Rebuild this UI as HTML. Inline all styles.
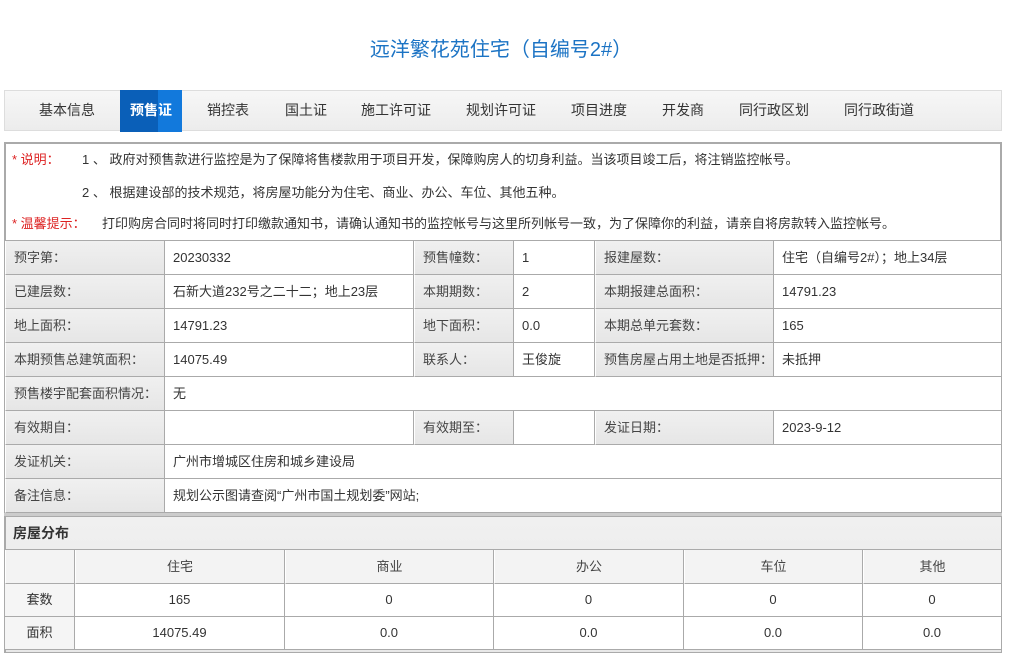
<!DOCTYPE html>
<html><head><meta charset="utf-8"><style>
*{margin:0;padding:0;box-sizing:border-box}
body{width:1012px;height:653px;background:#fff;font-family:"Liberation Sans","Noto Sans CJK SC",sans-serif;color:#333;position:relative;overflow:hidden;font-size:13px}
.a{position:absolute;white-space:nowrap}
.title{left:0;width:1002px;text-align:center;top:36px;font-size:20px;color:#1b73c4;line-height:28px}
.tabbar{left:4px;top:90px;width:998px;height:41px;background:linear-gradient(#f7f7f7,#ececec);border:1px solid #ddd}
.tab{top:90px;line-height:41px;font-size:14px;color:#333}
.act{left:120px;top:90px;width:62px;height:42px;background:linear-gradient(90deg,#0a5fb8 0,#0a5fb8 38px,#1279dc 38px);color:#fff;font-weight:bold;text-align:center;line-height:41px;font-size:14px}
.box{left:4px;top:142px;width:998px;height:372px;border:2px solid #aaa;border-bottom:none}
.red{color:#d22}
.cell{position:absolute;border-right:1px solid #aaa;border-bottom:1px solid #aaa;height:34px;line-height:33px;padding-left:8px;font-size:13px}
.lb{background:linear-gradient(#f0f0f0,#e6e6e6);border-left:1px solid #fff;color:#444}
.vl{background:#fff}
.cen{text-align:center;padding-left:0}
</style></head><body>
<div class="a title">远洋繁花苑住宅（自编号2#）</div>
<div class="a tabbar"></div>
<div class="a tab" style="left:39px">基本信息</div>
<div class="a act">预售证</div>
<div class="a tab" style="left:207px">销控表</div>
<div class="a tab" style="left:285px">国土证</div>
<div class="a tab" style="left:361px">施工许可证</div>
<div class="a tab" style="left:466px">规划许可证</div>
<div class="a tab" style="left:571px">项目进度</div>
<div class="a tab" style="left:662px">开发商</div>
<div class="a tab" style="left:739px">同行政区划</div>
<div class="a tab" style="left:844px">同行政街道</div>
<div class="a box"></div>
<div class="a red" style="left:12px;top:151px;line-height:18px">* 说明：</div>
<div class="a" style="left:82px;top:151px;line-height:18px">1 、 政府对预售款进行监控是为了保障将售楼款用于项目开发，保障购房人的切身利益。当该项目竣工后，将注销监控帐号。</div>
<div class="a" style="left:82px;top:184px;line-height:18px">2 、 根据建设部的技术规范，将房屋功能分为住宅、商业、办公、车位、其他五种。</div>
<div class="a red" style="left:12px;top:215px;line-height:18px">* 温馨提示：</div>
<div class="a" style="left:102px;top:215px;line-height:18px">打印购房合同时将同时打印缴款通知书，请确认通知书的监控帐号与这里所列帐号一致，为了保障你的利益，请亲自将房款转入监控帐号。</div>
<div class="a" style="left:5px;top:240px;width:997px;border-top:1px solid #aaa"></div>
<div class="cell lb" style="left:5px;top:241px;width:160px">预字第：</div>
<div class="cell vl" style="left:165px;top:241px;width:249px">20230332</div>
<div class="cell lb" style="left:414px;top:241px;width:100px">预售幢数：</div>
<div class="cell vl" style="left:514px;top:241px;width:81px">1</div>
<div class="cell lb" style="left:595px;top:241px;width:179px">报建屋数：</div>
<div class="cell vl" style="left:774px;top:241px;width:228px">住宅（自编号2#）；地上34层</div>

<div class="cell lb" style="left:5px;top:275px;width:160px">已建层数：</div>
<div class="cell vl" style="left:165px;top:275px;width:249px">石新大道232号之二十二；地上23层</div>
<div class="cell lb" style="left:414px;top:275px;width:100px">本期期数：</div>
<div class="cell vl" style="left:514px;top:275px;width:81px">2</div>
<div class="cell lb" style="left:595px;top:275px;width:179px">本期报建总面积：</div>
<div class="cell vl" style="left:774px;top:275px;width:228px">14791.23</div>

<div class="cell lb" style="left:5px;top:309px;width:160px">地上面积：</div>
<div class="cell vl" style="left:165px;top:309px;width:249px">14791.23</div>
<div class="cell lb" style="left:414px;top:309px;width:100px">地下面积：</div>
<div class="cell vl" style="left:514px;top:309px;width:81px">0.0</div>
<div class="cell lb" style="left:595px;top:309px;width:179px">本期总单元套数：</div>
<div class="cell vl" style="left:774px;top:309px;width:228px">165</div>

<div class="cell lb" style="left:5px;top:343px;width:160px">本期预售总建筑面积：</div>
<div class="cell vl" style="left:165px;top:343px;width:249px">14075.49</div>
<div class="cell lb" style="left:414px;top:343px;width:100px">联系人：</div>
<div class="cell vl" style="left:514px;top:343px;width:81px">王俊旋</div>
<div class="cell lb" style="left:595px;top:343px;width:179px">预售房屋占用土地是否抵押：</div>
<div class="cell vl" style="left:774px;top:343px;width:228px">未抵押</div>

<div class="cell lb" style="left:5px;top:377px;width:160px">预售楼宇配套面积情况：</div>
<div class="cell vl" style="left:165px;top:377px;width:837px">无</div>

<div class="cell lb" style="left:5px;top:411px;width:160px">有效期自：</div>
<div class="cell vl" style="left:165px;top:411px;width:249px"></div>
<div class="cell lb" style="left:414px;top:411px;width:100px">有效期至：</div>
<div class="cell vl" style="left:514px;top:411px;width:81px"></div>
<div class="cell lb" style="left:595px;top:411px;width:179px">发证日期：</div>
<div class="cell vl" style="left:774px;top:411px;width:228px">2023-9-12</div>

<div class="cell lb" style="left:5px;top:445px;width:160px">发证机关：</div>
<div class="cell vl" style="left:165px;top:445px;width:837px">广州市增城区住房和城乡建设局</div>

<div class="cell lb" style="left:5px;top:479px;width:160px">备注信息：</div>
<div class="cell vl" style="left:165px;top:479px;width:837px">规划公示图请查阅“广州市国土规划委”网站;</div>

<div class="a" style="left:4px;top:513px;width:998px;height:3px;background:#ccc"></div>
<div class="a" style="left:4px;top:516px;width:998px;height:137px;border:1px solid #aaa;border-left:2px solid #aaa;background:linear-gradient(#f0f0f0,#e8e8e8)"></div>
<div class="a" style="left:13px;top:523px;font-size:14px;font-weight:bold;color:#333;line-height:20px">房屋分布</div>
<div class="a" style="left:5px;top:549px;width:997px;border-top:1px solid #aaa"></div>

<div class="cell lb cen" style="left:5px;top:550px;width:70px;background:#f3f3f3"></div>
<div class="cell lb cen" style="left:75px;top:550px;width:210px;background:#f3f3f3">住宅</div>
<div class="cell lb cen" style="left:285px;top:550px;width:209px;background:#f3f3f3">商业</div>
<div class="cell lb cen" style="left:494px;top:550px;width:190px;background:#f3f3f3">办公</div>
<div class="cell lb cen" style="left:684px;top:550px;width:179px;background:#f3f3f3">车位</div>
<div class="cell lb cen" style="left:863px;top:550px;width:139px;background:#f3f3f3">其他</div>

<div class="cell vl cen" style="left:5px;top:584px;width:70px;height:33px;line-height:32px;background:#f5f5f5">套数</div>
<div class="cell vl cen" style="left:75px;top:584px;width:210px;height:33px;line-height:32px">165</div>
<div class="cell vl cen" style="left:285px;top:584px;width:209px;height:33px;line-height:32px">0</div>
<div class="cell vl cen" style="left:494px;top:584px;width:190px;height:33px;line-height:32px">0</div>
<div class="cell vl cen" style="left:684px;top:584px;width:179px;height:33px;line-height:32px">0</div>
<div class="cell vl cen" style="left:863px;top:584px;width:139px;height:33px;line-height:32px">0</div>

<div class="cell vl cen" style="left:5px;top:617px;width:70px;height:33px;line-height:32px;background:#f5f5f5">面积</div>
<div class="cell vl cen" style="left:75px;top:617px;width:210px;height:33px;line-height:32px">14075.49</div>
<div class="cell vl cen" style="left:285px;top:617px;width:209px;height:33px;line-height:32px">0.0</div>
<div class="cell vl cen" style="left:494px;top:617px;width:190px;height:33px;line-height:32px">0.0</div>
<div class="cell vl cen" style="left:684px;top:617px;width:179px;height:33px;line-height:32px">0.0</div>
<div class="cell vl cen" style="left:863px;top:617px;width:139px;height:33px;line-height:32px">0.0</div>
</body></html>
